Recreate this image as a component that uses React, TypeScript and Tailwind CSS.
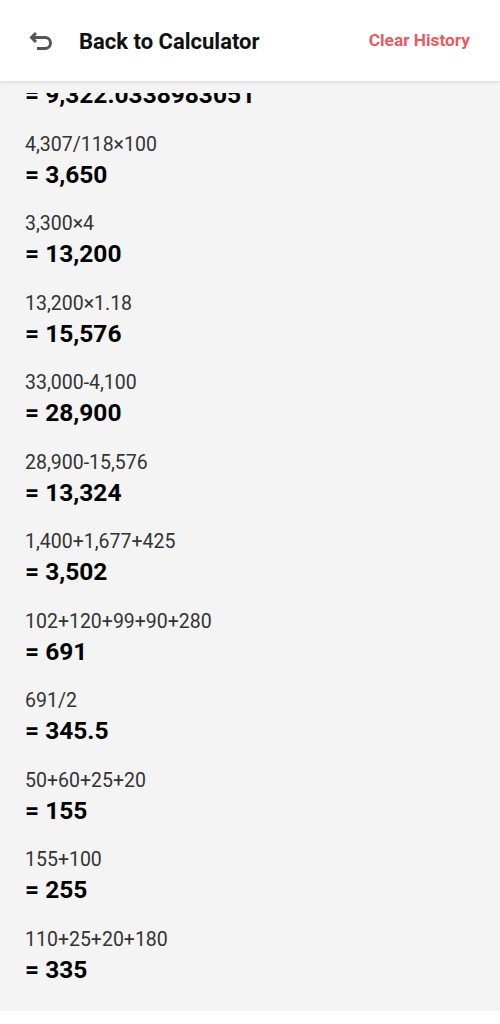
const history = [
  { expr: "9,322.0338983051/1", result: "9,322.0338983051" },
  { expr: "4,307/118×100", result: "3,650" },
  { expr: "3,300×4", result: "13,200" },
  { expr: "13,200×1.18", result: "15,576" },
  { expr: "33,000-4,100", result: "28,900" },
  { expr: "28,900-15,576", result: "13,324" },
  { expr: "1,400+1,677+425", result: "3,502" },
  { expr: "102+120+99+90+280", result: "691" },
  { expr: "691/2", result: "345.5" },
  { expr: "50+60+25+20", result: "155" },
  { expr: "155+100", result: "255" },
  { expr: "110+25+20+180", result: "335" },
];

function BackIcon() {
  return (
    <svg width="26" height="22" viewBox="0 0 26 22" fill="none" className="shrink-0">
      <path
        d="M9 3 4.5 7.5 9 12M4.5 7.5H18a5.5 5.5 0 0 1 0 11h-8"
        stroke="#555"
        strokeWidth="3"
        strokeLinecap="butt"
        strokeLinejoin="miter"
      />
    </svg>
  );
}

export default function App() {
  return (
    <div className="w-[500px] min-h-[1024px] bg-white font-['Roboto',sans-serif]">
      <header className="relative z-10 h-[81px] flex items-center bg-white shadow-[0_1px_4px_rgba(0,0,0,0.12)] pl-[27px] pr-[30px] pt-[1px]">
        <BackIcon />
        <h1 className="ml-[26px] text-[22px] font-bold text-[#111]">Back to Calculator</h1>
        <button type="button" className="ml-auto text-[17.3px] font-bold text-[#ea5a60]">
          Clear History
        </button>
      </header>

      <div className="bg-[#f4f4f4] pt-[12px]">
        <div className="overflow-hidden">
          <ul className="-mt-[52px] pb-[16px]">
            {history.map((item, i) => (
              <li key={i} className="h-[79.5px] px-[25px] pt-[10px]">
                <p className="h-[28px] leading-[28px] text-[19.5px] text-[#333]">{item.expr}</p>
                <p className="h-[32px] leading-[32px] text-[24.5px] font-bold text-black">= {item.result}</p>
              </li>
            ))}
          </ul>
        </div>
      </div>
    </div>
  );
}
